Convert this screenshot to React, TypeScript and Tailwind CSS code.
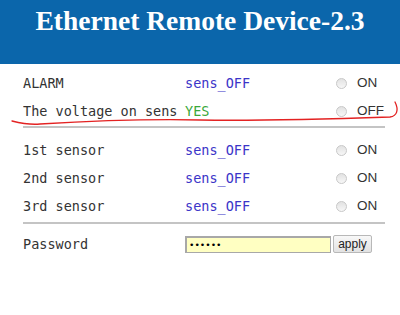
import React from "react";

type Row = { label: string; value: string; ok?: boolean; state: string };

const topRows: Row[] = [
  { label: "ALARM", value: "sens_OFF", state: "ON" },
  { label: "The voltage on sens", value: "YES", ok: true, state: "OFF" },
];

const sensorRows: Row[] = [
  { label: "1st sensor", value: "sens_OFF", state: "ON" },
  { label: "2nd sensor", value: "sens_OFF", state: "ON" },
  { label: "3rd sensor", value: "sens_OFF", state: "ON" },
];

const Radio = () => (
  <span className="inline-block h-[11px] w-[11px] rounded-full border border-[#c8c8c8] bg-gradient-to-b from-[#e2e2e2] to-[#f7f7f7]" />
);

const SensorRow = ({ row }: { row: Row }) => (
  <div className="flex h-[28px] items-center">
    <span className="w-[162px] whitespace-nowrap overflow-hidden text-[#333]">{row.label}</span>
    <span className={`w-[151px] ${row.ok ? "text-[#3aa83a]" : "text-[#3b35c8]"}`}>{row.value}</span>
    <span className="flex items-center gap-[10px] font-['Liberation_Sans',Arial,sans-serif] text-[13.5px] text-[#333]">
      <Radio />
      {row.state}
    </span>
  </div>
);

export default function App() {
  return (
    <div className="relative h-[315px] w-[400px] overflow-hidden bg-white">
      <header className="flex h-[64px] justify-center bg-[#0b66ab] pt-[5px]">
        <h1 className="font-['Liberation_Serif','Times_New_Roman',serif] text-[27.5px] font-bold leading-[32px] text-white">
          Ethernet Remote Device-2.3
        </h1>
      </header>

      <main className="ml-[23px] w-[362px] pt-[5px] font-['DejaVu_Sans_Mono','Liberation_Mono',monospace] text-[13.5px]">
        {topRows.map((r) => (
          <SensorRow key={r.label} row={r} />
        ))}
        <div className="mb-[8px] mt-[1px] h-[2px] bg-[#c4c4c4]" />
        {sensorRows.map((r) => (
          <SensorRow key={r.label} row={r} />
        ))}
        <div className="mt-[2px] h-[2px] bg-[#c4c4c4]" />
        <div className="flex h-[40px] items-center">
          <span className="w-[162px] text-[#333]">Password</span>
          <input
            type="password"
            defaultValue="123456"
            className="h-[17px] w-[146px] border border-t-2 border-l-2 border-[#a8a8a8] bg-[#ffffc2] px-[2px] text-[9px] outline-none"
          />
          <button className="ml-[2px] h-[18px] w-[39px] rounded-[2px] border border-[#b8b8b8] bg-gradient-to-b from-[#f8f8f8] to-[#e2e2e2] font-['Liberation_Sans',Arial,sans-serif] text-[12px] leading-none text-[#222]">
            apply
          </button>
        </div>
      </main>

      {/* hand-drawn red annotation */}
      <svg className="pointer-events-none absolute left-0 top-0" width="400" height="315">
        <path
          d="M12 121 C 20 123, 30 125, 40 124 C 90 121, 150 119, 200 120 C 260 121, 330 119, 390 117 C 397 116, 399 110, 395 102"
          fill="none"
          stroke="#e32222"
          strokeWidth="1.3"
          strokeLinecap="round"
        />
      </svg>
    </div>
  );
}
